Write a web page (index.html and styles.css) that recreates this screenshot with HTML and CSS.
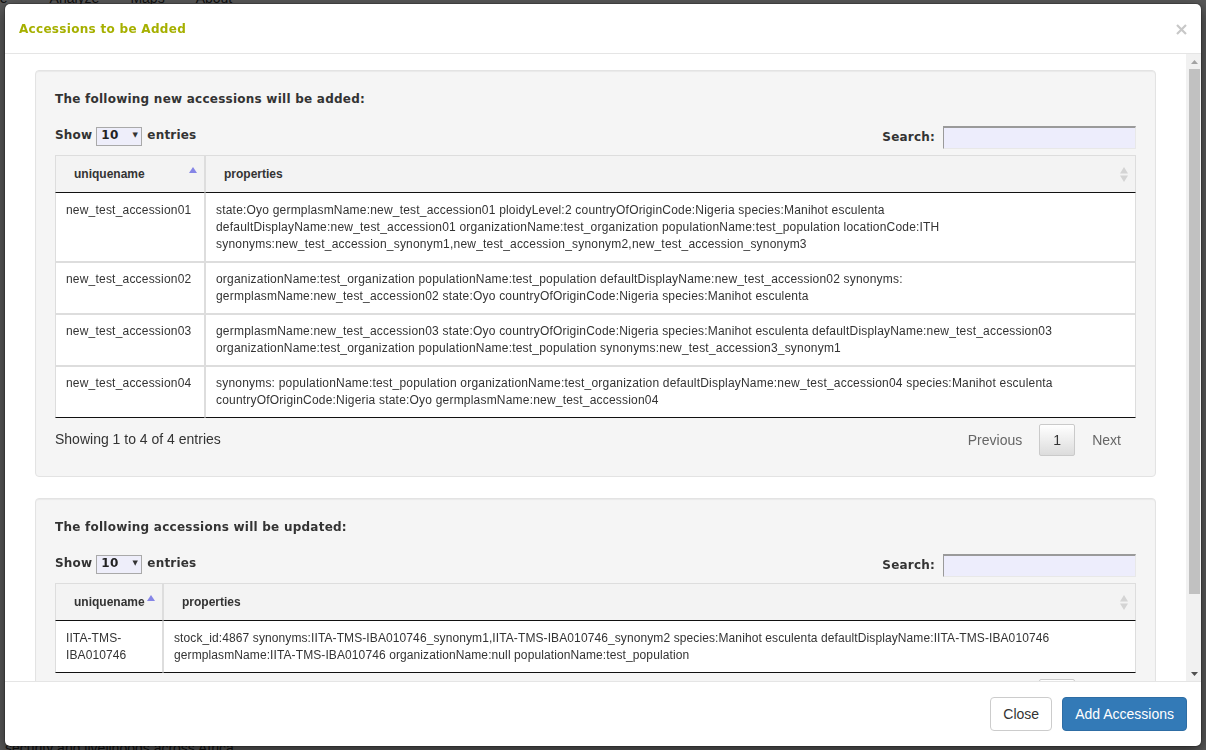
FILE: index.html
```html
<!DOCTYPE html>
<html lang="en">
<head>
<meta charset="utf-8">
<title>Accessions to be Added</title>
<link rel="stylesheet" href="styles.css">
</head>
<body>
<div class="page">
  <nav class="nav">
    <span class="nav-item nav-first">Manage</span>
    <span class="nav-item">Analyze</span>
    <span class="nav-item">Maps</span>
    <span class="nav-item">About</span>
  </nav>
  <p class="tagline">security and livelihoods across Africa.</p>
</div>
<div class="backdrop"></div>

<div class="modal">
  <div class="modal-header">
    <h4 class="modal-title">Accessions to be Added</h4>
    <button class="close" aria-label="Close">
      <svg width="11" height="11" viewBox="0 0 11 11"><path d="M1 1L10 10M10 1L1 10" stroke="#c8c8c8" stroke-width="2.2" fill="none"/></svg>
    </button>
  </div>

  <div class="modal-body">
    <div class="body-content">

      <div class="well">
        <h5 class="well-title">The following new accessions will be added:</h5>
        <div class="dt-controls">
          <label class="dt-length">Show <span class="select"><span>10</span><span class="caret">▼</span></span> entries</label>
          <label class="dt-filter">Search: <span class="search-input"></span></label>
        </div>
        <table class="dt">
          <thead>
            <tr>
              <th class="c-name-wide"><div class="th-in"><span>uniquename</span>
                <svg class="sort" width="8" height="15" viewBox="0 0 8 15"><path d="M4 0L8 6H0Z" fill="#8585e6"/></svg></div></th>
              <th><div class="th-in"><span>properties</span>
                <svg class="sort" width="8" height="15" viewBox="0 0 8 15"><path d="M4 0L8 6.5H0Z M0 8.5H8L4 15Z" fill="#d4d4d4"/></svg></div></th>
            </tr>
          </thead>
          <tbody>
            <tr>
              <td>new_test_accession01</td>
              <td>state:Oyo germplasmName:new_test_accession01 ploidyLevel:2 countryOfOriginCode:Nigeria species:Manihot esculenta<br>defaultDisplayName:new_test_accession01 organizationName:test_organization populationName:test_population locationCode:ITH<br>synonyms:new_test_accession_synonym1,new_test_accession_synonym2,new_test_accession_synonym3</td>
            </tr>
            <tr>
              <td>new_test_accession02</td>
              <td>organizationName:test_organization populationName:test_population defaultDisplayName:new_test_accession02 synonyms:<br>germplasmName:new_test_accession02 state:Oyo countryOfOriginCode:Nigeria species:Manihot esculenta</td>
            </tr>
            <tr>
              <td>new_test_accession03</td>
              <td>germplasmName:new_test_accession03 state:Oyo countryOfOriginCode:Nigeria species:Manihot esculenta defaultDisplayName:new_test_accession03<br>organizationName:test_organization populationName:test_population synonyms:new_test_accession3_synonym1</td>
            </tr>
            <tr>
              <td>new_test_accession04</td>
              <td>synonyms: populationName:test_population organizationName:test_organization defaultDisplayName:new_test_accession04 species:Manihot esculenta<br>countryOfOriginCode:Nigeria state:Oyo germplasmName:new_test_accession04</td>
            </tr>
          </tbody>
        </table>
        <div class="dt-bottom">
          <div class="dt-info">Showing 1 to 4 of 4 entries</div>
          <div class="dt-paginate">
            <span class="pg">Previous</span><span class="pg current">1</span><span class="pg">Next</span>
          </div>
        </div>
      </div>

      <div class="well">
        <h5 class="well-title">The following accessions will be updated:</h5>
        <div class="dt-controls">
          <label class="dt-length">Show <span class="select"><span>10</span><span class="caret">▼</span></span> entries</label>
          <label class="dt-filter">Search: <span class="search-input"></span></label>
        </div>
        <table class="dt dt-tight">
          <thead>
            <tr>
              <th class="c-name-narrow"><div class="th-in"><span>uniquename</span>
                <svg class="sort" width="8" height="15" viewBox="0 0 8 15"><path d="M4 0L8 6H0Z" fill="#8585e6"/></svg></div></th>
              <th><div class="th-in"><span>properties</span>
                <svg class="sort" width="8" height="15" viewBox="0 0 8 15"><path d="M4 0L8 6.5H0Z M0 8.5H8L4 15Z" fill="#d4d4d4"/></svg></div></th>
            </tr>
          </thead>
          <tbody>
            <tr>
              <td>IITA-TMS-IBA010746</td>
              <td>stock_id:4867 synonyms:IITA-TMS-IBA010746_synonym1,IITA-TMS-IBA010746_synonym2 species:Manihot esculenta defaultDisplayName:IITA-TMS-IBA010746<br>germplasmName:IITA-TMS-IBA010746 organizationName:null populationName:test_population</td>
            </tr>
          </tbody>
        </table>
        <div class="dt-bottom">
          <div class="dt-info">Showing 1 to 1 of 1 entries</div>
          <div class="dt-paginate">
            <span class="pg">Previous</span><span class="pg current">1</span><span class="pg">Next</span>
          </div>
        </div>
      </div>

    </div>
    <div class="scrollbar">
      <div class="sb-btn"><svg width="7" height="4" viewBox="0 0 7 4"><path d="M3.5 0L7 4H0Z" fill="#a3a3a3"/></svg></div>
      <div class="sb-track"><div class="sb-thumb"></div></div>
      <div class="sb-btn"><svg width="7" height="4" viewBox="0 0 7 4"><path d="M0 0H7L3.5 4Z" fill="#505050"/></svg></div>
    </div>
  </div>

  <div class="modal-footer">
    <button class="btn btn-default">Close</button>
    <button class="btn btn-primary">Add Accessions</button>
  </div>
</div>
</body>
</html>
```
FILE: styles.css
```css
* { box-sizing: border-box; }

html, body {
  margin: 0;
  height: 750px;
  overflow: hidden;
}

body {
  font-family: "Liberation Sans", Arial, sans-serif;
  font-size: 14px;
  line-height: 1.42857;
  color: #333;
  background: #fff;
}

/* page behind the modal */
.page {
  height: 750px;
  display: flex;
  flex-direction: column;
  justify-content: space-between;
}
.nav {
  display: flex;
  margin: -12px 0 0 -43px;
  line-height: 20px;
}
.nav-item { margin-right: 31px; }
.nav-first { margin-right: 42px; }
.tagline {
  margin: 0 0 -8px 5px;
  line-height: 20px;
}

.backdrop {
  position: fixed;
  inset: 0;
  background: rgba(0, 0, 0, 0.65);
}

/* modal */
.modal {
  position: fixed;
  left: 4px;
  top: 3px;
  width: 1198px;
  height: 744px;
  background: #fff;
  background-clip: padding-box;
  border: 1px solid rgba(0, 0, 0, 0.2);
  border-radius: 6px;
  box-shadow: 0 5px 15px rgba(0, 0, 0, 0.5);
  display: flex;
  flex-direction: column;
  overflow: hidden;
}

.modal-header {
  height: 50px;
  padding: 2px 14px 0 14px;
  border-bottom: 1px solid #e5e5e5;
  display: flex;
  align-items: center;
  justify-content: space-between;
}
.modal-title {
  margin: 0;
  font-family: "DejaVu Sans", sans-serif;
  font-weight: bold;
  font-size: 12px;
  letter-spacing: 0.3px;
  line-height: 19px;
  color: #a6b000;
}
.close {
  border: 0;
  background: none;
  padding: 0;
  width: 11px;
  height: 11px;
  display: flex;
}

.modal-body {
  flex: 1;
  min-height: 0;
  display: flex;
}
.body-content {
  flex: 1;
  min-width: 0;
  overflow: hidden;
  padding: 16px 30px 0 30px;
}

/* fake scrollbar */
.scrollbar {
  width: 15px;
  background: #f1f1f1;
  display: flex;
  flex-direction: column;
}
.sb-btn {
  height: 15px;
  display: flex;
  align-items: center;
  justify-content: center;
  padding-left: 1px;
}
.sb-track {
  flex: 1;
  padding: 0 1px 0 3px;
}
.sb-thumb {
  height: 525px;
  background: #c1c1c1;
}

/* wells */
.well {
  background: #f5f5f5;
  border: 1px solid #e3e3e3;
  border-radius: 4px;
  box-shadow: inset 0 1px 1px rgba(0, 0, 0, 0.05);
  padding: 19px 19px 20px;
  margin-bottom: 21px;
}
.well-title {
  margin: 0;
  font-family: "DejaVu Sans", sans-serif;
  font-weight: bold;
  font-size: 12px;
  letter-spacing: 0.24px;
  line-height: 18px;
  color: #333;
}

/* datatables controls */
.dt-controls {
  display: flex;
  justify-content: space-between;
  margin-top: 18px;
  height: 25px;
  font-family: "DejaVu Sans", sans-serif;
  font-weight: bold;
  font-size: 12px;
  letter-spacing: 0.2px;
}
.dt-length {
  display: flex;
  align-items: center;
  gap: 4px;
  height: 18px;
  margin-top: 1px;
}
.dt-length .select { margin-right: 1px; }
.select {
  display: flex;
  align-items: center;
  width: 46px;
  height: 19px;
  padding-left: 4px;
  border: 1px solid #a9a9a9;
  background: #eeeefa;
  color: #222;
}
.select .caret {
  font-size: 7px;
  margin-left: 14px;
  color: #333;
}
.dt-filter {
  display: flex;
  align-items: center;
  gap: 8px;
  height: 23px;
}
.search-input {
  width: 193px;
  height: 23px;
  background: #ededfc;
  border-top: 2px solid #9a9a9a;
  border-left: 1px solid #9a9a9a;
  border-right: 1px solid #e8e8e8;
  border-bottom: 1px solid #e8e8e8;
}

/* table */
.dt {
  width: 100%;
  margin-top: 4px;
  border-collapse: separate;
  border-spacing: 0;
  table-layout: fixed;
  font-size: 12px;
  line-height: 17px;
  background: #fff;
}
.dt th {
  background: #f3f3f3;
  text-align: left;
  font-weight: bold;
  padding: 10px 7px 9px 18px;
  border: 1px solid #ddd;
  border-bottom-color: #111;
}
.c-name-wide { width: 150px; }
.c-name-narrow { width: 108px; }
.th-in {
  display: flex;
  align-items: center;
  justify-content: space-between;
}
.sort { flex: none; }
.dt td {
  padding: 8px 10px;
  border: 1px solid #ddd;
  vertical-align: top;
  color: #333;
  letter-spacing: 0.2px;
}
.dt-tight td { letter-spacing: 0.1px; }
.dt tbody tr:first-child td { border-top: 0; padding-top: 9px; }
.dt tbody tr:last-child td { border-bottom-color: #111; }

.dt-bottom {
  display: flex;
  justify-content: space-between;
  align-items: center;
  height: 32px;
  margin-top: 6px;
}
.dt-paginate { display: flex; }
.pg {
  padding: 5px 14px;
  line-height: 20px;
  border: 1px solid transparent;
  border-radius: 2px;
  margin-left: 2px;
  color: #666;
}
.pg.current {
  min-width: 36px;
  padding: 5px 0;
  text-align: center;
  border-color: #cacaca;
  background: linear-gradient(#ffffff, #dcdcdc);
  color: #333;
}

/* footer */
.modal-footer {
  border-top: 1px solid #e5e5e5;
  padding: 15px 14px 15px 15px;
  display: flex;
  justify-content: flex-end;
  gap: 10px;
}
.btn {
  font-family: "Liberation Sans", Arial, sans-serif;
  font-size: 14px;
  line-height: 20px;
  padding: 6px 12px;
  border: 1px solid;
  border-radius: 4px;
}
.btn-default {
  background: #fff;
  border-color: #ccc;
  color: #333;
}
.btn-primary {
  background: #337ab7;
  border-color: #2e6da4;
  color: #fff;
}
```
